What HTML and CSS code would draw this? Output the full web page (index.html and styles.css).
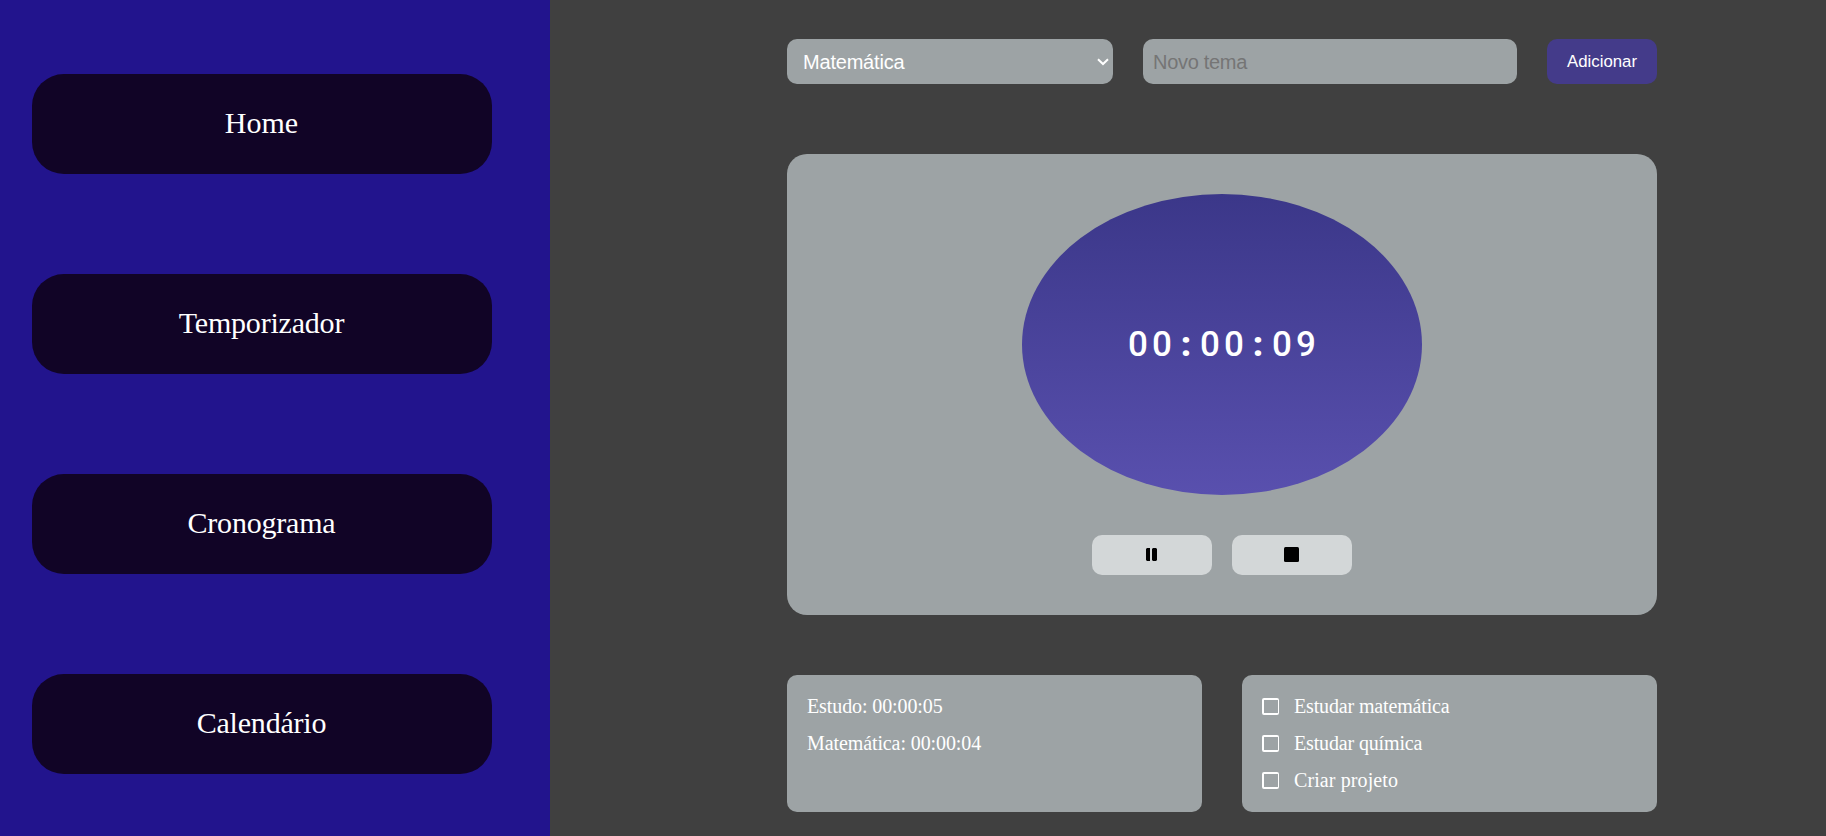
FILE: index.html
```html
<!DOCTYPE html>
<html lang="pt-BR">
<head>
<meta charset="utf-8">
<title>Temporizador</title>
<link rel="stylesheet" href="styles.css">
</head>
<body>
<nav class="sidebar">
  <a class="nav-item">Home</a>
  <a class="nav-item nav-tight">Temporizador</a>
  <a class="nav-item nav-tight">Cronograma</a>
  <a class="nav-item nav-tight">Calendário</a>
</nav>
<main class="content">
  <div class="topic-bar">
    <div class="select-wrap">
      <select class="topic-select"><option>Matemática</option></select>
      <svg class="chevron" width="12" height="8" viewBox="0 0 12 8"><path d="M1 1.2l5 4.8 5-4.8" fill="none" stroke="#fff" stroke-width="2"/></svg>
    </div>
    <input class="topic-input" type="text" placeholder="Novo tema">
    <button class="topic-add">Adicionar</button>
  </div>
  <section class="timer">
    <div class="clock"><span>0</span><span>0</span><span class="sep">:</span><span>0</span><span>0</span><span class="sep">:</span><span>0</span><span>9</span></div>
    <div class="controls">
      <button class="control" aria-label="Pausar">
        <svg width="11" height="13" viewBox="0 0 11 13"><path d="M1 0h3v13H1l-1-1V1zM7 0h3l1 1v11l-1 1H7l-1-1V1z"/></svg>
      </button>
      <button class="control" aria-label="Parar">
        <svg width="15" height="15" viewBox="0 0 15 15"><rect width="15" height="15" rx="1.5"/></svg>
      </button>
    </div>
  </section>
  <div class="cards">
    <ul class="card">
      <li>Estudo: 00:00:05</li>
      <li>Matemática: 00:00:04</li>
    </ul>
    <ul class="card tasks">
      <li><i class="box"></i>Estudar matemática</li>
      <li><i class="box"></i>Estudar química</li>
      <li><i class="box"></i>Criar projeto</li>
    </ul>
  </div>
</main>
</body>
</html>
```
FILE: styles.css
```css
* { box-sizing: border-box; margin: 0; padding: 0; }
body {
  display: flex;
  height: 836px;
  overflow: hidden;
  background: #404040;
  color: #fff;
  font-family: "Liberation Serif", "Times New Roman", serif;
}
.sidebar {
  width: 550px;
  height: 100%;
  padding: 74px 58px 62px 32px;
  display: flex;
  flex-direction: column;
  gap: 100px;
  background: #22148d;
}
.nav-item {
  height: 100px;
  flex: none;
  display: flex;
  align-items: center;
  justify-content: center;
  padding: 0 1px 2px 0;
  border-radius: 32px;
  background: #110426;
  font-size: 30px;
}
.nav-tight { letter-spacing: -0.2px; }
.content {
  width: 870px;
  margin-left: 237px;
  padding-top: 39px;
}
.topic-bar {
  display: flex;
  gap: 30px;
  height: 45px;
  margin-bottom: 70px;
}
.topic-select, .topic-input, .topic-add {
  height: 45px;
  border: 0;
  border-radius: 10px;
  background-color: #9da3a5;
  color: #fff;
  font: 20px "Liberation Sans", Arial, sans-serif;
}
.select-wrap { position: relative; width: 326px; }
.topic-select {
  width: 100%;
  padding: 0 16px;
  appearance: none;
  letter-spacing: -0.2px;
}
.chevron { position: absolute; right: 4px; top: 19px; }
.topic-input { width: 374px; padding: 1px 10px 0; letter-spacing: -0.3px; }
.topic-input::placeholder { color: #757575; }
.topic-add {
  width: 110px;
  background-color: #443b8a;
  font-size: 16.8px;
}
.timer {
  height: 461px;
  padding: 40px;
  display: flex;
  flex-direction: column;
  align-items: center;
  gap: 40px;
  border-radius: 20px;
  background: #9da3a5;
}
.clock {
  width: 400px;
  height: 301px;
  display: flex;
  align-items: center;
  justify-content: center;
  border-radius: 50%;
  background: linear-gradient(#3b3789, #5950ae);
  font: 500 35px Roboto, sans-serif;
}
.clock span { width: 24px; text-align: center; }
.clock .sep { font-weight: 900; }
.controls { display: flex; gap: 20px; }
.control {
  width: 120px;
  height: 40px;
  display: flex;
  align-items: center;
  justify-content: center;
  padding: 0 2px 1px 0;
  border: 0;
  border-radius: 10px;
  background: #d3d7d8;
}
.cards { display: flex; gap: 40px; margin-top: 60px; }
.card {
  width: 415px;
  height: 137px;
  padding: 20px;
  display: flex;
  flex-direction: column;
  gap: 14px;
  border-radius: 10px;
  background: #9da3a5;
  list-style: none;
  font-size: 20px;
  line-height: 23px;
  letter-spacing: -0.1px;
}
.card li { display: flex; align-items: center; }
.tasks { letter-spacing: -0.15px; }
.tasks li:last-child { letter-spacing: 0.1px; }
.box {
  width: 17px;
  height: 17px;
  margin-right: 15px;
  border: 2px solid #fff;
  border-right-width: 1px;
  border-radius: 2px;
}
```
